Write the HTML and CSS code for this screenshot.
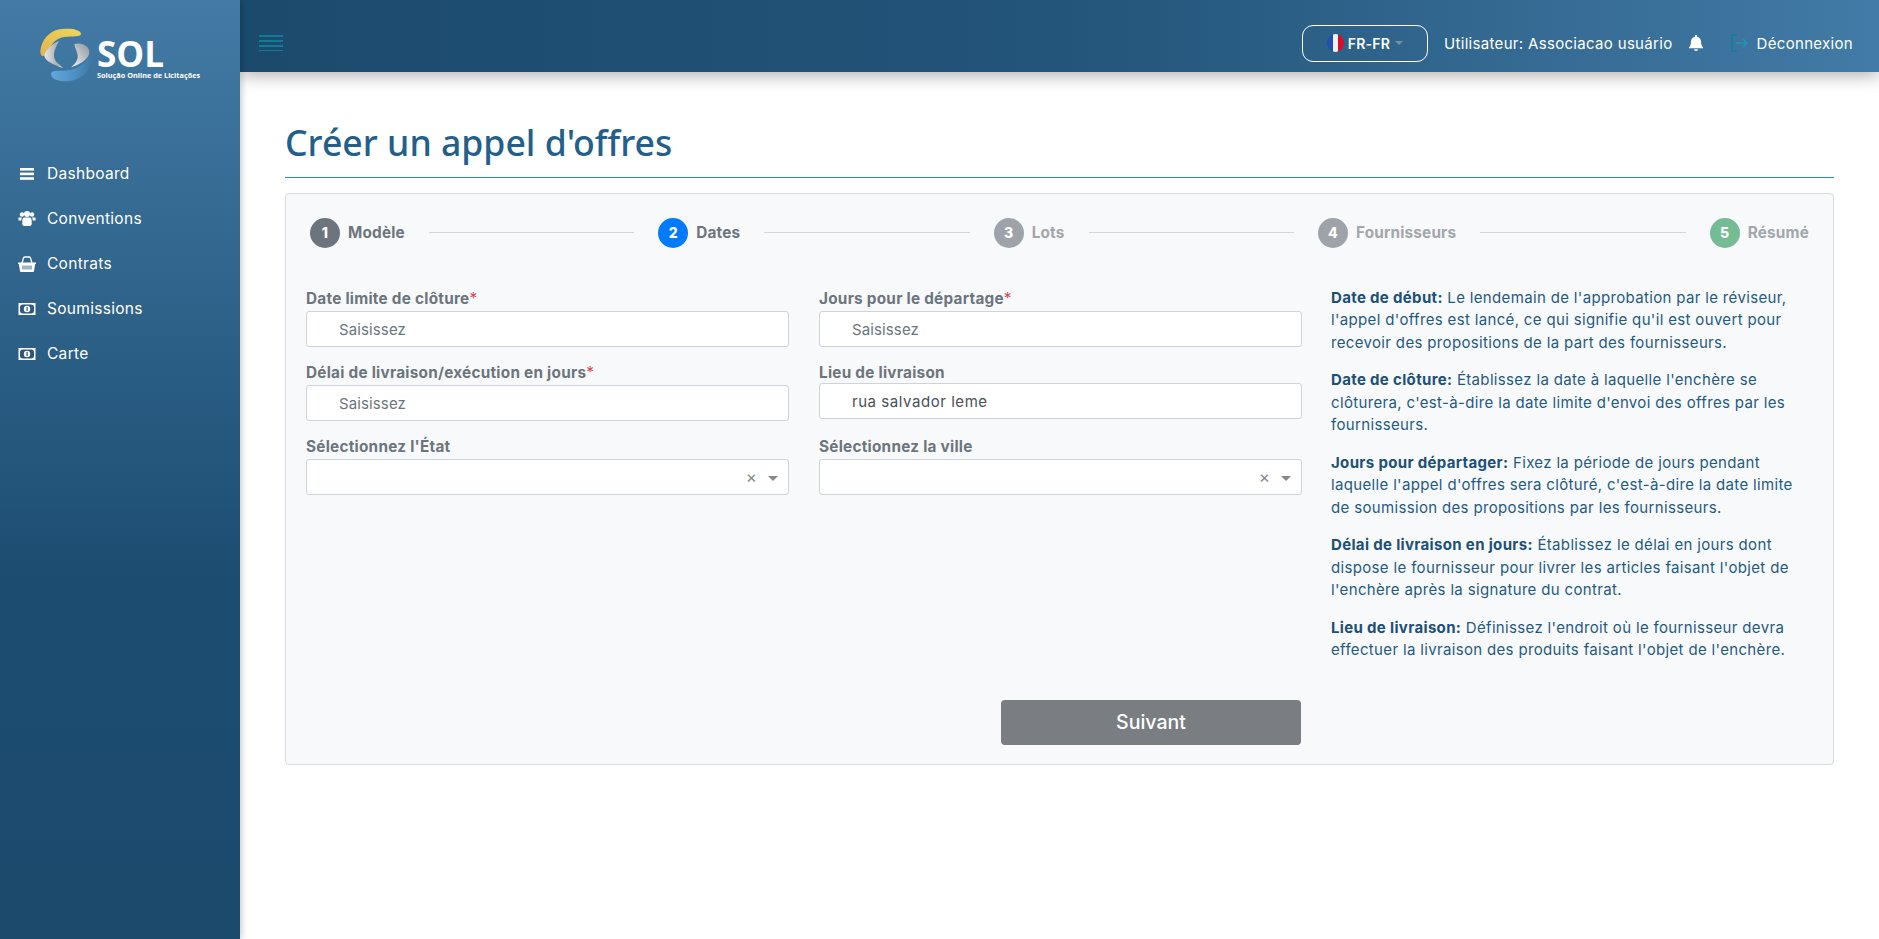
FILE: index.html
```html
<!DOCTYPE html>
<html lang="fr">
<head>
  <meta charset="UTF-8">
  <meta name="viewport" content="width=device-width, initial-scale=1.0">
  <title>Créer un appel d'offres</title>
  <link rel="stylesheet" href="styles.css">
</head>
<body>

<aside class="sidebar">
  <div class="logo">
    <svg class="logo-mark" width="52" height="55" viewBox="0 0 52 55">
      <defs>
        <linearGradient id="lg-yellow" x1="0" y1="1" x2="1" y2="0"><stop offset="0" stop-color="#e0b552"/><stop offset="1" stop-color="#f0d656"/></linearGradient>
        <linearGradient id="lg-grey" x1="0" y1="0" x2="1" y2="0"><stop offset="0" stop-color="#e8e8e8"/><stop offset="0.7" stop-color="#a9acb1"/><stop offset="1" stop-color="#e4e5e7"/></linearGradient>
        <linearGradient id="lg-greyr" x1="1" y1="0" x2="0" y2="1"><stop offset="0" stop-color="#8f959e"/><stop offset="1" stop-color="#f4f4f4"/></linearGradient>
        <linearGradient id="lg-blue" x1="0" y1="0" x2="1" y2="0"><stop offset="0" stop-color="#62a8dc"/><stop offset="0.6" stop-color="#4c8fc2"/><stop offset="1" stop-color="#3f78a4"/></linearGradient>
      </defs>
      <path d="M1 19C4 8 13 1 23 1c9-1 18 1 18 5 0 3-8 2-17 3-6 1-10 4-13 9-3 4-5 10-8 10-3 0-3-5-2-9z" fill="url(#lg-yellow)"/>
      <path d="M19 13C12 16 6 21 4.300 27.700 5 33 14 37 23 40c-4-4-9-7-9-12.300 0-4 1-7 5-14.700z" fill="url(#lg-grey)"/>
      <path d="M34.300 16c8-2 15 2 15 8.300 0 6-8 12-18.300 15 4-3 7-7 6.700-11.500-.2-4-3-8-3.400-11.800z" fill="url(#lg-greyr)"/>
      <path d="M51 24.300c1.500 8 0 12-3 17-3 7-12 12-22 12-7 0-15-2-15-7.300 0-3 5-3.500 8.300-3.300 13 .7 27-4 31.700-18.400z" fill="url(#lg-blue)"/>
    </svg>
    <div class="logo-text">
      <span class="logo-name">SOL</span>
      <span class="logo-sub">Solução Online de Licitações</span>
    </div>
  </div>

  <nav class="menu">
    <a class="menu-item">
      <svg width="14" height="12" viewBox="0 0 14 12" fill="#fff"><rect y="0" width="14" height="2.6"/><rect y="4.6" width="14" height="2.6"/><rect y="9.2" width="14" height="2.6"/></svg>
      Dashboard
    </a>
    <a class="menu-item">
      <svg width="17" height="15" viewBox="0 0 17 15" fill="#fff"><circle cx="3.5" cy="3.5" r="2.2"/><circle cx="13.5" cy="3.5" r="2.2"/><circle cx="8.5" cy="3" r="3"/><path d="M0 6.5h3.5c-.6 1-.8 2-.7 3H0zM17 6.5h-3.5c.6 1 .8 2 .7 3H17zM5.200 6.600h6.600c1 .8 1.400 2 1.400 3.400v3c0 1-1 2-2 2H5.800c-1 0-2-1-2-2v-3c0-1.400.4-2.600 1.400-3.400z"/></svg>
      Conventions
    </a>
    <a class="menu-item">
      <svg width="18" height="16" viewBox="0 0 18 16"><path d="M4 7l1.500-5C5.800 1.300 6.300 1 7 1h4c.7 0 1.200.3 1.500 1L14 7" fill="none" stroke="#fff" stroke-width="1.300"/><path d="M0 6.500h18V8h-.8L16 15c0 .5-.5 1-1 1H3c-.5 0-1-.5-1-1L.8 8H0z" fill="#fff"/><path d="M5 9.500v4M7 9.500v4M9 9.500v4M11 9.500v4M13 9.500v4" stroke="#3a6a92" stroke-width="1"/></svg>
      Contrats
    </a>
    <a class="menu-item">
      <svg width="17" height="12" viewBox="0 0 17 12"><rect width="17" height="12" fill="#fff"/><rect x="1.500" y="1.500" width="14" height="9" rx="3" fill="#2c5a80"/><circle cx="8.500" cy="6" r="3.200" fill="#fff"/><rect x="8" y="4" width="1.200" height="4" fill="#2c5a80"/></svg>
      Soumissions
    </a>
    <a class="menu-item">
      <svg width="17" height="12" viewBox="0 0 17 12"><rect width="17" height="12" fill="#fff"/><rect x="1.500" y="1.500" width="14" height="9" rx="3" fill="#2a5779"/><circle cx="8.500" cy="6" r="3.200" fill="#fff"/><rect x="8" y="4" width="1.200" height="4" fill="#2a5779"/></svg>
      Carte
    </a>
  </nav>
</aside>

<header class="topbar">
  <svg class="burger" width="24" height="16" viewBox="0 0 24 16" stroke="#0f8aa3" stroke-width="1.500"><path d="M0 1h24M0 6h24M0 11h24M0 16h24"/></svg>
  <div class="topbar-right">
    <div class="lang">
      <span class="flag"><i class="flag-b"></i><i class="flag-w"></i><i class="flag-r"></i></span>
      <span class="lang-code">FR-FR</span>
      <span class="caret"></span>
    </div>
    <span class="user">Utilisateur: Associacao usuário</span>
    <svg class="bell" width="14" height="16" viewBox="0 0 14 16" fill="#fff"><path d="M7 0c.6 0 1 .4 1 1v.7c2.300.5 4 2.400 4 4.800 0 3.500 1 4.800 2 5.800v1H0v-1c1-1 2-2.300 2-5.800 0-2.400 1.700-4.300 4-4.800V1c0-.6.400-1 1-1z"/><path d="M5 14.300h4c0 1-1 1.700-2 1.700s-2-.7-2-1.700z"/></svg>
    <svg class="exit" width="17" height="18" viewBox="0 0 17 18" fill="none" stroke="#0f7f99" stroke-width="1.500"><path d="M6 1H1v16h5"/><path d="M5 9h11M12 5l4 4-4 4" stroke="#2596b0"/></svg>
    <span class="logout">Déconnexion</span>
  </div>
</header>

<main class="content">
  <h1 class="page-title">Créer un appel d'offres</h1>

  <section class="card">
    <div class="steps">
      <div class="step step-done"><span class="num">1</span><span class="step-name">Modèle</span></div>
      <div class="step-line"></div>
      <div class="step step-active"><span class="num">2</span><span class="step-name">Dates</span></div>
      <div class="step-line"></div>
      <div class="step step-next"><span class="num">3</span><span class="step-name">Lots</span></div>
      <div class="step-line"></div>
      <div class="step step-next"><span class="num">4</span><span class="step-name">Fournisseurs</span></div>
      <div class="step-line"></div>
      <div class="step step-last"><span class="num">5</span><span class="step-name">Résumé</span></div>
    </div>

    <div class="body">
      <div class="form">
        <div class="field">
          <label>Date limite de clôture<em>*</em></label>
          <input class="input" type="text" placeholder="Saisissez">
        </div>
        <div class="field">
          <label>Jours pour le départage<em>*</em></label>
          <input class="input" type="text" placeholder="Saisissez">
        </div>
        <div class="field">
          <label>Délai de livraison/exécution en jours<em>*</em></label>
          <input class="input" type="text" placeholder="Saisissez">
        </div>
        <div class="field field-short">
          <label>Lieu de livraison</label>
          <input class="input" type="text" value="rua salvador leme">
        </div>
        <div class="field">
          <label>Sélectionnez l'État</label>
          <div class="select"><span class="clear">×</span><span class="arrow"></span></div>
        </div>
        <div class="field">
          <label>Sélectionnez la ville</label>
          <div class="select"><span class="clear">×</span><span class="arrow"></span></div>
        </div>
      </div>

      <div class="help">
        <p><b>Date de début:</b> Le lendemain de l'approbation par le réviseur,<br>l'appel d'offres est lancé, ce qui signifie qu'il est ouvert pour<br>recevoir des propositions de la part des fournisseurs.</p>
        <p><b>Date de clôture:</b> Établissez la date à laquelle l'enchère se<br>clôturera, c'est-à-dire la date limite d'envoi des offres par les<br>fournisseurs.</p>
        <p><b>Jours pour départager:</b> Fixez la période de jours pendant<br>laquelle l'appel d'offres sera clôturé, c'est-à-dire la date limite<br>de soumission des propositions par les fournisseurs.</p>
        <p><b>Délai de livraison en jours:</b> Établissez le délai en jours dont<br>dispose le fournisseur pour livrer les articles faisant l'objet de<br>l'enchère après la signature du contrat.</p>
        <p><b>Lieu de livraison:</b> Définissez l'endroit où le fournisseur devra<br>effectuer la livraison des produits faisant l'objet de l'enchère.</p>
      </div>
    </div>

    <div class="actions">
      <button class="next" type="button">Suivant</button>
    </div>
  </section>
</main>

</body>
</html>
```

FILE: styles.css
```css
* { box-sizing: border-box; }
html, body { height: 100%; }
body { margin: 0; height: 939px; overflow: hidden; background: #fff; color: #6c757d; font-family: Inter, "Noto Sans", sans-serif; display: grid; grid-template-columns: 240px 1fr; grid-template-rows: 72px 1fr; }

.sidebar { grid-row: 1 / 3; background: linear-gradient(180deg, #437ba6 0%, #1c4c70 62%, #1b4a6d 100%); box-shadow: 2px 0 6px rgba(0, 0, 0, 0.2); z-index: 2; }
.logo { display: flex; align-items: flex-start; padding: 28px 0 0 40px; height: 151px; }
.logo-mark { flex: none; }
.logo-text { display: flex; flex-direction: column; margin: 11px 0 0 5px; color: #fff; }
.logo-name { font-family: "Open Sans", sans-serif; font-size: 35px; line-height: 30px; font-weight: 700; }
.logo-sub { font-family: "Open Sans", sans-serif; font-size: 7.3px; line-height: 9px; font-weight: 700; white-space: nowrap; margin-top: 2px; }
.menu { display: flex; flex-direction: column; }
.menu-item { display: flex; align-items: center; height: 45px; padding-left: 18px; color: #fff; font-size: 15.5px; letter-spacing: 0.3px; }
.menu-item svg { width: 18px; margin-right: 11px; flex: none; }

.topbar { background: linear-gradient(90deg, #1b4a6d 0%, #235479 50%, #427ba7 100%); display: flex; align-items: center; justify-content: space-between; padding: 14px 26px 0 19px; box-shadow: 0 4px 16px rgba(0, 0, 0, 0.3); z-index: 1; color: #fff; }
.topbar-right { display: flex; align-items: center; font-size: 15px; letter-spacing: 0.32px; }
.lang { width: 126px; height: 37px; border: 1px solid #fff; border-radius: 11px; display: flex; align-items: center; justify-content: center; font-weight: 600; }
.flag { width: 17px; height: 18px; border-radius: 50%; overflow: hidden; display: flex; margin-right: 4px; }
.flag i { flex: 1; }
.flag-b { background: #1f4fb0; }
.flag-w { background: #f1f1f1; }
.flag-r { background: #de0a2a; }
.lang-code { font-size: 14px; letter-spacing: 0.2px; }
.caret { width: 0; height: 0; border: 4px solid transparent; border-top-color: #7f8c99; border-bottom: 0; margin-left: 5px; }
.user { margin-left: 16px; }
.bell { margin-left: 16px; }
.exit { margin-left: 28px; }
.logout { margin-left: 9px; }

.content { padding: 34px 45px 0; }
.page-title { margin: 0; padding-top: 11px; height: 72px; font-family: "Noto Sans", sans-serif; font-size: 35.6px; line-height: 50px; font-weight: 500; color: #235f8c; border-bottom: 1px solid #2a86dc; }
.card { margin-top: 15px; height: 572px; background: #f8f9fa; border: 1px solid #d8dadd; border-radius: 4px; padding: 0 20px; }

.steps { display: flex; align-items: center; height: 77px; padding: 0 4px; }
.step { display: flex; align-items: center; flex: none; font-size: 15.3px; font-weight: 700; letter-spacing: 0.2px; }
.num { width: 30px; height: 30px; border-radius: 50%; display: flex; align-items: center; justify-content: center; color: #fff; font-size: 14px; font-weight: 800; margin-right: 8px; }
.step-line { flex: 1; height: 1px; margin: 0 24px; background: #d5d7da; }
.step-done { color: #6c757d; }
.step-done .num { background: #6c757d; }
.step-active { color: #6c757d; }
.step-active .num { background: #007bff; }
.step-next { color: #a2a7ac; }
.step-next .num { background: #9ea3a9; }
.step-last { color: #a2a7ac; }
.step-last .num { background: #75bb93; }

.body { display: flex; margin-top: 16px; }
.form { width: 995px; display: grid; grid-template-columns: 483px 483px; column-gap: 30px; align-content: start; row-gap: 14px; flex: none; }
.field label { display: block; height: 24px; line-height: 24px; font-size: 15.3px; font-weight: 700; letter-spacing: 0.26px; color: #6c757d; }
.field-short label { height: 22px; }
.field em { color: #e0424f; font-style: normal; font-weight: 400; }
.input { display: block; width: 100%; height: 36px; border: 1px solid #ced4da; border-radius: 3px; padding: 0 32px; background: #fff; font: 15px Inter, sans-serif; letter-spacing: 0.55px; color: #495057; }
.input::placeholder { color: #6c757d; opacity: 1; letter-spacing: 0.12px; }
.select { height: 36px; background: #fff; border: 1px solid #ced4da; border-radius: 3px; display: flex; align-items: center; justify-content: flex-end; padding-right: 10px; }
.clear { color: #888; font-size: 17px; line-height: 1; margin-right: 11px; }
.arrow { width: 0; height: 0; border: 5px solid transparent; border-top-color: #888; border-bottom: 0; margin-top: 2px; }

.help { margin-left: 30px; color: #1f5a85; font-size: 15px; letter-spacing: 0.34px; line-height: 22.4px; white-space: nowrap; }
.help p { margin: 0 0 15.2px; }
.help b { font-weight: 700; color: #1b5079; }

.actions { margin: 23px 0 0 695px; }
.next { display: block; width: 300px; height: 45px; border: 0; border-radius: 4px; background: #7a7d81; color: #fff; font: 500 19.5px Inter, sans-serif; }
```
